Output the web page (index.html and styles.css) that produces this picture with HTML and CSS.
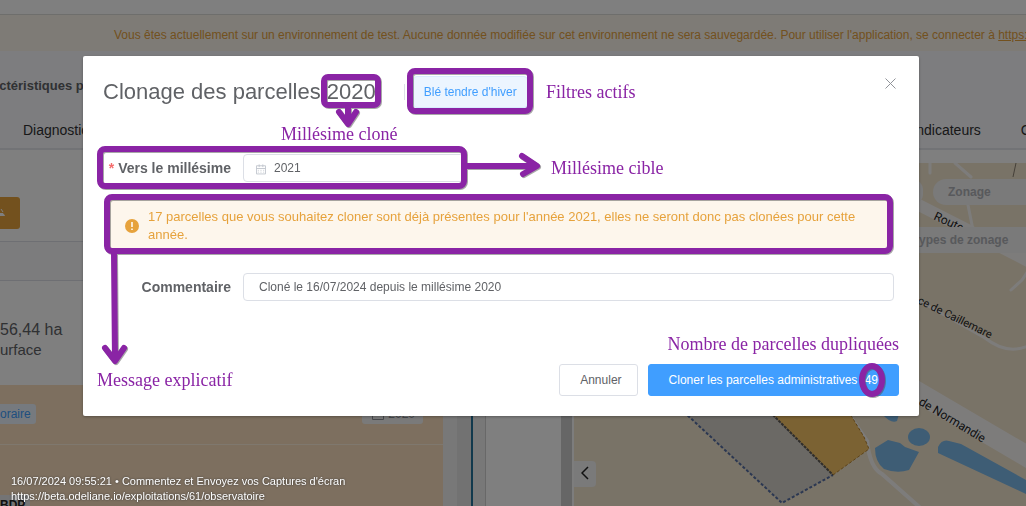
FILE: index.html
```
<!DOCTYPE html>
<html lang="fr">
<head>
    <meta charset="UTF-8">
    <meta name="viewport" content="width=device-width, initial-scale=1.0">
    <title>Clonage des parcelles</title>
    <link rel="stylesheet" href="styles.css">
</head>
<body>

    <div class="page">
        <div class="topbar"></div>
        <div class="env-alert">
            <p>Vous êtes actuellement sur un environnement de test. Aucune donnée modifiée sur cet environnement ne sera sauvegardée. Pour utiliser l'application, se connecter à <a href="#">https://</a></p>
        </div>
        <header class="page-header">
            <div class="crumb">actéristiques pr</div>
            <nav class="tabs">
                <a href="#">Diagnostic</a>
                <a href="#" class="tab-right">Indicateurs</a>
                <a href="#">C</a>
            </nav>
        </header>
        <div class="content">
            <section class="list">
                <div class="actions">
                    <button class="btn-warning" aria-label="Action">
                        <svg width="5" height="10" viewBox="0 0 5 10"><path d="M1 2l2 3M0 6.500h3l1.500 2H0z" fill="#fff" stroke="#fff"/></svg>
                    </button>
                </div>
                <div class="filters"></div>
                <div class="surface">
                    <p class="surface-value">56,44 ha</p>
                    <p class="surface-label">Surface</p>
                </div>
                <div class="culture">
                    <div class="culture-row">
                        <span class="tag">oraire</span>
                        <span class="tag tag-date">
                            <svg width="12" height="12" viewBox="0 0 12 12"><path d="M.5 2.500h11v9H.5zM.5 5.500h11" fill="none" stroke="#909399"/></svg>
                            2020
                        </span>
                    </div>
                    <div class="culture-row culture-next">
                        <span class="tag tag-bdp">BDP</span>
                    </div>
                </div>
            </section>
            <div class="gutter"></div>
            <div class="side"></div>
            <div class="scroll"></div>
            <section class="map">
                <svg class="map-canvas" viewBox="574 163 452 343" preserveAspectRatio="xMinYMin slice">
                    <g fill="none" stroke="#fbf9f7" stroke-linecap="round">
                        <path d="M905 198L960 226L1030 262" stroke-width="12"/>
                        <path d="M930 163v10M955 163l16 14" stroke-width="3"/>
                        <path d="M968 205l5 25M1030 268l-8 12l-11 10" stroke-width="3"/>
                        <path d="M900 290L985 338Q1008 356 1030 345" stroke-width="3"/>
                        <path d="M890 376L1040 464" stroke-width="21"/>
                        <path d="M845 409L867 441Q870 468 882 474L925 512" stroke-width="4"/>
                    </g>
                    <path d="M1016 163l-3 14" stroke="#8a8070"/>
                    <path d="M684 412L782 503L833 475L770 412z" fill="#d6d2cb"/>
                    <path d="M770 412L833 475L869 449L864 437L849 412z" fill="#f6c467"/>
                    <path d="M684 412L782 503L833 475" fill="none" stroke="#566fa3" stroke-width="2" stroke-dasharray="3 2"/>
                    <path d="M770 412L833 475" stroke="#5e5a56" stroke-width="2" stroke-dasharray="3 1"/>
                    <path d="M833 475L869 449L864 437L849 412" fill="none" stroke="#b98530" stroke-dasharray="3 2"/>
                    <g fill="#7cbaea">
                        <path d="M882 414h17l-2 7q-6 3-15-7z"/>
                        <ellipse cx="919" cy="437" rx="11" ry="9"/>
                        <path d="M875 448l13-8 12 3 5 4 14 5-10 18q-12 4-25-1-9-7-9-21z"/>
                        <path d="M938 447q4-8 11-6l12 3 65 36v14l-88-41z"/>
                    </g>
                    <g class="road-name">
                        <text transform="translate(933 219) rotate(25)">Route</text>
                        <text transform="translate(917 303) rotate(26)" class="road-small">ce de Caillemare</text>
                        <text transform="translate(918 404) rotate(31)">de Normandie</text>
                    </g>
                </svg>
                <div class="map-filters">
                    <span class="pill pill-end"></span>
                    <span class="pill">Zonage</span>
                    <span class="pill pill-wide">ypes de zonage</span>
                </div>
                <button class="collapse" aria-label="Replier">
                    <svg width="8" height="14" viewBox="0 0 8 14"><path d="M7 1L1 7l6 6" fill="none" stroke="#222" stroke-width="1.500"/></svg>
                </button>
            </section>
        </div>
    </div>

    <div class="overlay">
        <div class="dialog" role="dialog" aria-labelledby="title">
            <div class="dialog-header">
                <h1 id="title">Clonage des parcelles 2020</h1>
                <span class="divider"></span>
                <span class="filter-tag">Blé tendre d'hiver</span>
                <button class="close" aria-label="Fermer">
                    <svg width="11" height="11" viewBox="0 0 11 11"><path d="M.5.5l10 10M10.500.5l-10 10" stroke="#909399" fill="none"/></svg>
                </button>
            </div>
            <div class="form-row">
                <label for="millesime"><span class="required">*</span> Vers le millésime</label>
                <div class="date-input">
                    <svg width="11" height="13" viewBox="0 0 11 13"><path d="M.5 3.500h10v9H.5zM.5 6.500h10M3.500 2v3M7.500 2v3" fill="none" stroke="#c0c4cc"/><path d="M2 8.500h7M2 10.500h7" stroke="#c0c4cc" stroke-dasharray="1 2"/></svg>
                    <input type="text" id="millesime" value="2021">
                </div>
            </div>
            <div class="message">
                <svg width="14" height="14" viewBox="0 0 14 14"><circle cx="7" cy="7" r="7" fill="#e6a23c"/><path d="M7 3v5M7 9.500v1.500" stroke="#fff" stroke-width="1.500"/></svg>
                <p>17 parcelles que vous souhaitez cloner sont déjà présentes pour l'année 2021, elles ne seront donc pas clonées pour cette année.</p>
            </div>
            <div class="form-row">
                <label for="commentaire">Commentaire</label>
                <input type="text" id="commentaire" class="comment" value="Cloné le 16/07/2024 depuis le millésime 2020">
            </div>
            <div class="dialog-footer">
                <button class="btn">Annuler</button>
                <button class="btn btn-primary">Cloner les parcelles administratives <span class="count">49</span></button>
            </div>

            <!-- annotations -->
            <svg class="marks" width="836" height="360" viewBox="83 56 836 360">
                <g class="mark">
                    <rect x="324" y="77" width="54" height="28" rx="4"/>
                    <rect x="410" y="71" width="120" height="40" rx="5"/>
                    <rect x="100" y="149" width="364" height="37" rx="5"/>
                    <rect x="107" y="197" width="783" height="54" rx="5"/>
                    <ellipse cx="872" cy="380" rx="10" ry="14"/>
                    <path d="M348 108v14M339 112l9 12 8-12"/>
                    <path d="M464 166h72M522 156l15 10-14 8"/>
                    <path d="M114 254l1 106M105 348l10 13 9-13"/>
                </g>
            </svg>
            <span class="note note-cloned">Millésime cloné</span>
            <span class="note note-filters">Filtres actifs</span>
            <span class="note note-target">Millésime cible</span>
            <span class="note note-message">Message explicatif</span>
            <span class="note note-count">Nombre de parcelles dupliquées</span>
        </div>
    </div>

    <div class="capture">
        16/07/2024 09:55:21 • Commentez et Envoyez vos Captures d'écran<br>
        https://beta.odeliane.io/exploitations/61/observatoire
    </div>

</body>
</html>
```
FILE: styles.css
```
* {
    margin: 0;
    padding: 0;
    box-sizing: border-box;
}

body {
    font-family: "Liberation Sans", Arial, sans-serif;
    font-size: 12px;
    color: #606266;
    height: 100vh;
    overflow: hidden;
}

button,
input {
    font: inherit;
    color: inherit;
}

.page {
    display: flex;
    flex-direction: column;
    height: 100vh;
    overflow: hidden;
}

.topbar {
    height: 15px;
    flex-shrink: 0;
    border-bottom: 1px solid #dcdcd8;
}

.env-alert {
    height: 36px;
    flex-shrink: 0;
    padding-left: 114px;
    background: #fdf6ec;
    color: #e6a23c;
    line-height: 40px;
    white-space: nowrap;
    overflow: hidden;
}

.env-alert a {
    color: inherit;
}

.page-header {
    height: 99px;
    flex-shrink: 0;
    background: #fafafe;
    border-bottom: 2px solid #e4e7ed;
    overflow: hidden;
}

.crumb {
    margin-left: -8px;
    padding-top: 25px;
    font-size: 13px;
    line-height: 20px;
    font-weight: bold;
}

.tabs {
    display: flex;
    gap: 40px;
    padding: 23px 0 0 23px;
    width: 1200px;
    font-size: 14px;
    line-height: 22px;
}

.tabs a {
    color: #303133;
    text-decoration: none;
}

.tab-right {
    margin-left: 784px;
}

.content {
    display: flex;
    flex: 1;
    min-height: 0;
}

.list {
    width: 443px;
    flex-shrink: 0;
}

.actions {
    height: 91px;
    padding-top: 47px;
}

.btn-warning {
    width: 20px;
    height: 32px;
    border: none;
    border-radius: 0 3px 3px 0;
    background: #e6a23c;
    text-align: left;
}

.filters {
    height: 40px;
    background: #f8f9fb;
    border-top: 1px solid #dcdfe6;
    border-bottom: 1px solid #dcdfe6;
}

.surface {
    height: 104px;
    padding-top: 39px;
    font-size: 16px;
    line-height: 20px;
}

.surface-label {
    margin-left: -10px;
    font-size: 15px;
}

.culture {
    background: #fadfbe;
    height: 200px;
}

.culture-row {
    display: flex;
    justify-content: space-between;
    height: 60px;
    padding: 19px 20px 0 0;
    border-bottom: 1px solid #fff0dc;
}

.culture-next {
    padding-top: 50px;
    height: 90px;
}

.tag {
    height: 20px;
    padding-right: 5px;
    border-radius: 0 3px 3px 0;
    background: #ecf5ff;
    color: #409eff;
    line-height: 20px;
}

.tag-date {
    display: flex;
    align-items: center;
    gap: 4px;
    padding: 0 8px 0 10px;
    border-radius: 3px;
    background: #f4f4f5;
    color: #909399;
}

.tag-bdp {
    color: #222;
    font-weight: bold;
    background: #e8e8ea;
}

.gutter {
    width: 42px;
    flex-shrink: 0;
    border-left: 14px solid #f0f0f0;
    border-right: 12px solid #f0f0f0;
    background: #e4e4e4;
    box-shadow: inset -2px 0 #23739b;
}

.side {
    width: 76px;
    flex-shrink: 0;
    border-left: 1px solid #d0d0d0;
}

.scroll {
    width: 13px;
    flex-shrink: 0;
    background: #cccccc;
    border-right: 2px solid #fafafa;
}

.map {
    flex: 1;
    position: relative;
    margin-top: 13px;
    background: #f2e6cf;
    overflow: hidden;
}

.map-canvas {
    display: block;
    width: 100%;
    height: 100%;
}

.road-name {
    font-family: Roboto, sans-serif;
    font-size: 12px;
    fill: #222;
}

.road-small {
    font-size: 11px;
}

.map-filters {
    position: absolute;
    top: 16px;
    left: 338px;
    display: grid;
    grid-template-columns: 11px 130px;
    gap: 22px 10px;
}

.pill {
    height: 26px;
    padding-left: 15px;
    border-radius: 13px;
    background: #f4f4f4;
    color: #b0b3b8;
    font-weight: bold;
    line-height: 26px;
}

.pill-end {
    padding: 0;
    border-radius: 0 13px 13px 0;
}

.pill-wide {
    grid-column: span 2;
    padding-left: 7px;
    border-radius: 0;
}

.collapse {
    position: absolute;
    left: 0;
    bottom: 19px;
    width: 22px;
    height: 26px;
    border: none;
    border-radius: 0 4px 4px 0;
    background: #f4f4f4;
}

.overlay {
    position: fixed;
    inset: 0;
    padding: 56px 107px 0 83px;
    background: rgba(0, 0, 0, 0.5);
}

.dialog {
    position: relative;
    padding: 20px;
    border-radius: 2px;
    background: #fff;
    box-shadow: 0 1px 3px rgba(0, 0, 0, 0.3);
}

.dialog-header {
    display: flex;
    align-items: center;
    height: 32px;
}

.dialog-header h1 {
    font-size: 22px;
    font-weight: normal;
}

.divider {
    width: 1px;
    height: 16px;
    margin: 0 8px 0 28px;
    background: #dcdfe6;
}

.filter-tag {
    height: 32px;
    padding: 0 10px;
    border: 1px solid #d9ecff;
    border-radius: 4px;
    background: #ecf5ff;
    color: #409eff;
    line-height: 30px;
}

.close {
    margin: -14px 3px 0 auto;
    border: none;
    background: none;
}

.form-row {
    display: flex;
    align-items: center;
    gap: 12px;
    margin-top: 46px;
    padding-right: 5px;
}

.form-row label {
    width: 128px;
    font-size: 14px;
    font-weight: bold;
    text-align: right;
    white-space: nowrap;
}

.required {
    color: #f56c6c;
}

.date-input {
    display: flex;
    align-items: center;
    gap: 8px;
    width: 221px;
    height: 28px;
    padding: 0 12px;
    border: 1px solid #dcdfe6;
    border-radius: 4px;
}

.date-input input {
    width: 100%;
    border: none;
}

.comment {
    flex: 1;
    height: 28px;
    padding: 0 15px;
    border: 1px solid #dcdfe6;
    border-radius: 4px;
}

.message {
    display: flex;
    align-items: center;
    gap: 9px;
    margin: 18px 8px 0 6px;
    padding: 8px 16px;
    background: #fdf6ec;
    color: #e6a23c;
    font-size: 13px;
    line-height: 18px;
}

.message svg {
    flex-shrink: 0;
}

.message + .form-row {
    margin-top: 21px;
}

.dialog-footer {
    display: flex;
    justify-content: flex-end;
    gap: 10px;
    margin-top: 63px;
}

.btn {
    height: 32px;
    padding: 0 15px 0 20px;
    border: 1px solid #dcdfe6;
    border-radius: 3px;
    background: #fff;
}

.btn-primary {
    padding: 0 20px;
    border-color: #409eff;
    background: #409eff;
    color: #fff;
}

.count {
    margin-left: 4px;
}

.marks {
    position: absolute;
    top: 0;
    left: 0;
    pointer-events: none;
}

.mark {
    fill: none;
    stroke: #8a24a5;
    stroke-width: 6;
    stroke-linecap: round;
    stroke-linejoin: round;
    filter: drop-shadow(1px 1px 0 rgba(80, 80, 80, 0.5));
}

.note {
    position: absolute;
    color: #8a24a5;
    font-family: "Liberation Serif", "Times New Roman", serif;
    font-size: 18px;
    line-height: 20px;
    white-space: nowrap;
}

.note-cloned {
    top: 68px;
    left: 198px;
}

.note-filters {
    top: 26px;
    left: 463px;
}

.note-target {
    top: 102px;
    left: 468px;
}

.note-message {
    top: 314px;
    left: 14px;
}

.note-count {
    top: 278px;
    right: 20px;
}

.capture {
    position: fixed;
    left: 11px;
    bottom: 2px;
    color: #fff;
    font-size: 11px;
    line-height: 15px;
    text-shadow: 0 0 2px #333;
}
```
